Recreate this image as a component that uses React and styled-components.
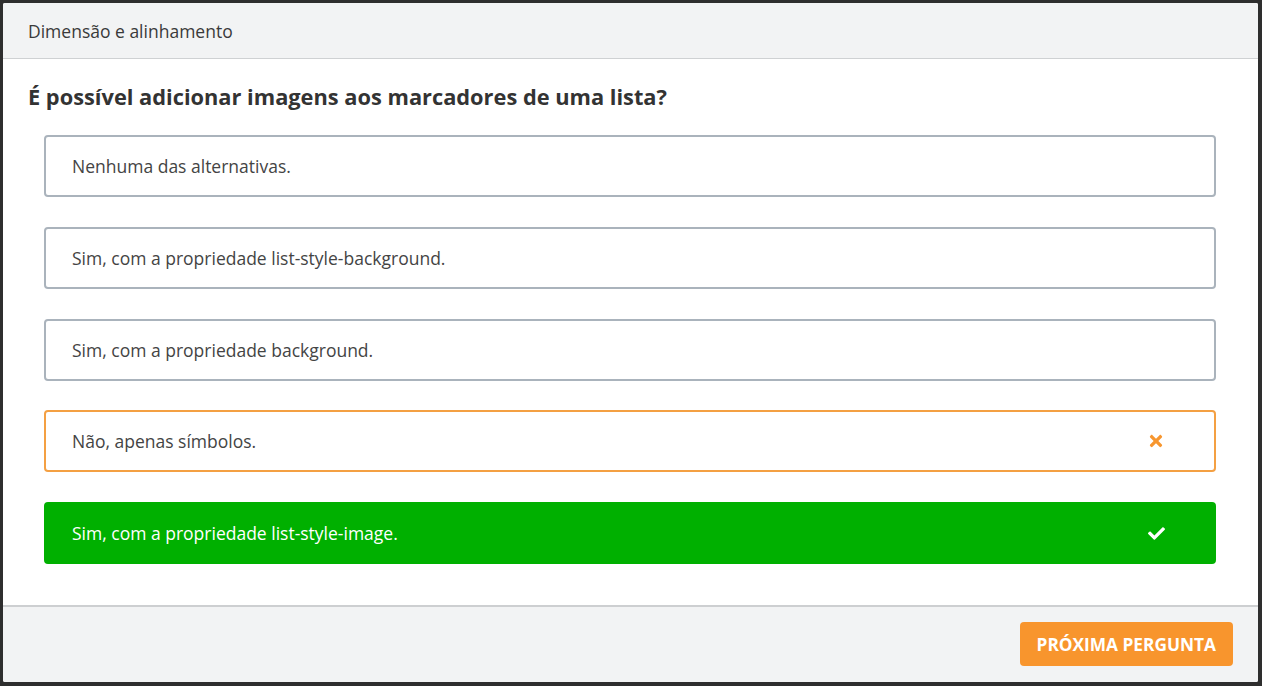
import React from "react";
import styled, { createGlobalStyle } from "styled-components";
import { FaTimes, FaCheck } from "react-icons/fa";

const Global = createGlobalStyle`
  html, body { margin: 0; padding: 0; background: #2e2e2e; }
  body { font-family: "Open Sans", "Noto Sans", sans-serif; }
  * { box-sizing: border-box; }
`;

const Modal = styled.div`
  margin: 3px 4px 4px 3px;
  height: 679px;
  background: #fff;
  display: flex;
  flex-direction: column;
  border-radius: 2px;
  overflow: hidden;
`;

const Header = styled.div`
  height: 56px;
  flex: none;
  background: #f2f3f4;
  border-bottom: 1px solid #cfd1d3;
  display: flex;
  align-items: center;
  padding: 0 25px;
  font-size: 17.5px;
  color: #3a3a3a;
`;

const Body = styled.div`
  flex: 1;
  padding: 23px 25px 0 25px;
`;

const Question = styled.h2`
  margin: 0 0 23px 0;
  font-size: 21.8px;
  line-height: 30px;
  font-weight: 700;
  color: #333;
`;

const OptionList = styled.div`
  display: flex;
  flex-direction: column;
  gap: 29.75px;
  padding: 0 17px 0 16px;
`;

const Option = styled.div`
  height: 62px;
  display: flex;
  align-items: center;
  justify-content: space-between;
  padding: 0 49px 0 26px;
  border-radius: 4px;
  font-size: 17.5px;
  border: 2px solid
    ${(p) =>
      p.$state === "wrong" ? "#f4a043" : p.$state === "right" ? "#00b000" : "#aab3bc"};
  background: ${(p) => (p.$state === "right" ? "#00b000" : "#fff")};
  color: ${(p) => (p.$state === "right" ? "#fff" : "#444")};
`;

const Icon = styled.span`
  display: flex;
  align-items: center;
  color: ${(p) => (p.$state === "wrong" ? "#f7962f" : "#fff")};
  font-size: ${(p) => (p.$state === "wrong" ? "18px" : "17px")};
`;

const Footer = styled.div`
  height: 77px;
  flex: none;
  background: #f2f3f4;
  border-top: 2px solid #cdcfd1;
  display: flex;
  align-items: flex-start;
  justify-content: flex-end;
  padding: 15px 25px 0 0;
`;

const NextButton = styled.button`
  height: 44px;
  padding: 0 17px;
  background: #f8952d;
  color: #fff;
  border: none;
  border-radius: 4px;
  font-family: "Open Sans", "Noto Sans", sans-serif;
  font-weight: 700;
  font-size: 17.3px;
  text-transform: uppercase;
  cursor: pointer;
`;

const options = [
  { text: "Nenhuma das alternativas." },
  { text: "Sim, com a propriedade list-style-background." },
  { text: "Sim, com a propriedade background." },
  { text: "Não, apenas símbolos.", state: "wrong" },
  { text: "Sim, com a propriedade list-style-image.", state: "right" },
];

export default function App() {
  return (
    <>
      <Global />
      <Modal>
        <Header>Dimensão e alinhamento</Header>
        <Body>
          <Question>É possível adicionar imagens aos marcadores de uma lista?</Question>
          <OptionList>
            {options.map((o) => (
              <Option key={o.text} $state={o.state}>
                <span>{o.text}</span>
                {o.state && (
                  <Icon $state={o.state}>
                    {o.state === "wrong" ? <FaTimes /> : <FaCheck />}
                  </Icon>
                )}
              </Option>
            ))}
          </OptionList>
        </Body>
        <Footer>
          <NextButton>Próxima pergunta</NextButton>
        </Footer>
      </Modal>
    </>
  );
}
